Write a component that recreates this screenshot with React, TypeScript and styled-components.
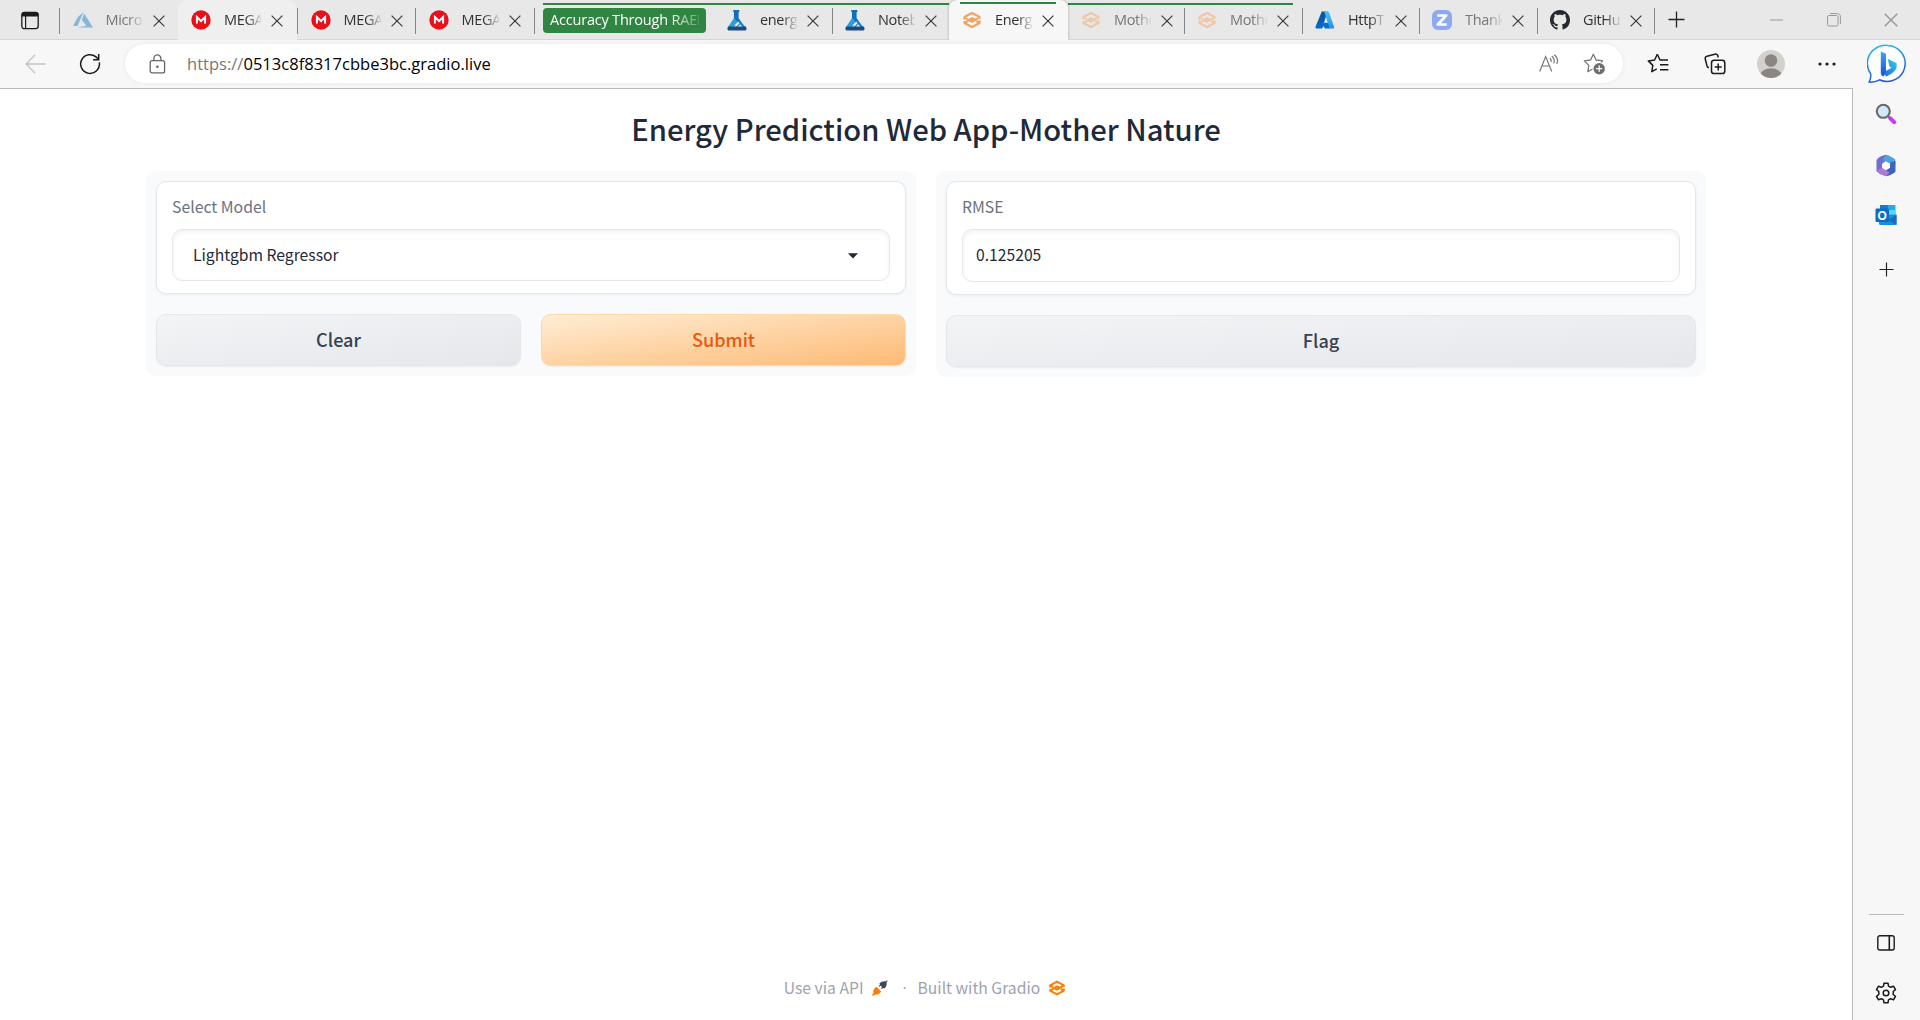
import React from "react";
import styled, { createGlobalStyle, css } from "styled-components";

const ui = `"Open Sans", "Noto Sans", sans-serif`;
const source = `"Noto Sans CJK SC", "Open Sans", sans-serif`;

const GlobalStyle = createGlobalStyle`
  * { box-sizing: border-box; }
  body { margin: 0; background: #fff; overflow: hidden; }
  svg { display: block; flex: none; }
`;

const Window = styled.div`
  display: flex;
  flex-direction: column;
  width: 1920px;
  height: 1020px;
  font-family: ${ui};
  background: #f7f7f7;
`;

/* ---------- Tab strip ---------- */

const TabStrip = styled.div`
  display: flex;
  height: 40px;
  background: #e8e8e8;
  box-shadow: inset 0 -1px 0 #d6d6d6;
`;

const WorkspaceButton = styled.div`
  width: 59px;
  display: flex;
  align-items: center;
  padding: 0 0 0 21px;
`;

const separator = css`
  &::before {
    content: "";
    position: absolute;
    left: 0;
    top: 8px;
    width: 1px;
    height: 26px;
    background: #858585;
  }
`;

const TabItem = styled.div<{ $width: number; $inset: number; $active?: boolean; $hover?: boolean; $line?: boolean; $lineEnd?: number; $divider?: boolean }>`
  position: relative;
  display: flex;
  align-items: center;
  flex: none;
  width: ${(p) => p.$width}px;
  padding: 0 0 0 ${(p) => p.$inset}px;
  ${(p) => p.$divider && separator}
  ${(p) => p.$hover && css`
    background: #efefef;
    border-radius: 9px 9px 0 0;
  `}
  ${(p) => p.$line && css`
    &::after {
      content: "";
      position: absolute;
      left: 0;
      right: ${p.$lineEnd ?? 0}px;
      top: 3px;
      height: 2px;
      background: #2f8541;
    }
  `}
  ${(p) => p.$active && css`
    z-index: 1;
    background: #f7f7f7;
    border-radius: 8px 8px 0 0;
    box-shadow: 0 0 3px rgba(0, 0, 0, 0.3);
    clip-path: inset(-2px -4px 0 -4px);
    &::after {
      left: 11px;
      right: 12px;
      top: 2px;
    }
  `}
`;

const Favicon = styled.div<{ $faded?: boolean }>`
  width: 20px;
  height: 20px;
  margin-right: 13px;
  opacity: ${(p) => (p.$faded ? 0.45 : 1)};
`;

const TabTitle = styled.div<{ $faded?: boolean }>`
  width: 37px;
  overflow: hidden;
  white-space: nowrap;
  font-size: 14.5px;
  line-height: 22px;
  letter-spacing: -0.35px;
  color: ${(p) => (p.$faded ? "#777" : "#333")};
  mask-image: linear-gradient(90deg, #000 60%, transparent 105%);
`;

const TabClose = styled.div`
  margin-left: 10px;
  padding-top: 1px;
`;

const TabGroup = styled.div`
  position: relative;
  width: 180px;
  flex: none;
  ${separator}
`;

const GroupChip = styled.div`
  width: 163px;
  height: 25px;
  margin: 8px 8px 0 9px;
  padding: 0 7px;
  border-radius: 4px;
  background: #2f8541;
  position: relative;
  &::before {
    content: "";
    position: absolute;
    left: 0;
    width: 171px;
    top: -5px;
    height: 2px;
    background: #2f8541;
  }
`;

const ChipText = styled.div`
  overflow: hidden;
  white-space: nowrap;
  color: #fff;
  font-size: 14.5px;
  line-height: 23px;
  letter-spacing: -0.2px;
  mask-image: linear-gradient(90deg, #000 80%, rgba(0, 0, 0, 0.25) 100%);
`;

const NewTab = styled.div`
  position: relative;
  width: 45px;
  display: flex;
  align-items: center;
  justify-content: center;
  padding-bottom: 1px;
  ${separator}
`;

const WindowControls = styled.div`
  display: flex;
  margin-left: auto;
`;

const ControlButton = styled.div`
  width: 57.5px;
  display: flex;
  align-items: center;
  justify-content: center;
  padding-bottom: 1px;
`;

/* ---------- Toolbar ---------- */

const Body = styled.div`
  display: flex;
  flex: 1;
  min-height: 0;
`;

const MainColumn = styled.div`
  display: flex;
  flex-direction: column;
  width: 1852px;
`;

const Toolbar = styled.div`
  display: flex;
  align-items: center;
  height: 48px;
  padding: 0 0 1px 17px;
`;

const NavButton = styled.div`
  flex: none;
  width: 54px;
  padding-left: 8px;
`;

const AddressBar = styled.div`
  display: flex;
  flex: none;
  align-items: center;
  width: 1498px;
  height: 39px;
  padding: 0 18px 0 24px;
  border-radius: 20px;
  background: #fff;
  box-shadow: 0 0 4px rgba(0, 0, 0, 0.07);
`;

const Url = styled.div`
  margin-left: 21px;
  font-size: 16.5px;
  line-height: 24px;
  letter-spacing: 0.02px;
  color: #000;
  white-space: nowrap;
`;

const Scheme = styled.span`
  color: #777;
`;

const AddressActions = styled.div`
  display: flex;
  align-items: center;
  gap: 24px;
  margin-left: auto;
`;

const ToolbarActions = styled.div`
  display: flex;
  flex: none;
  margin-left: 7px;
`;

const ToolbarButton = styled.div`
  width: 56.4px;
  flex: none;
  display: flex;
  align-items: center;
  justify-content: center;
`;

/* ---------- Edge sidebar ---------- */

const SideBar = styled.aside`
  display: flex;
  flex-direction: column;
  align-items: center;
  width: 68px;
`;

const BingSlot = styled.div`
  height: 48px;
  padding: 4px 0 0 1px;
`;

const SideInner = styled.div`
  display: flex;
  flex: 1;
  flex-direction: column;
  align-items: center;
  width: 68px;
  padding-right: 1px;
  border-left: 1px solid #b8b8b8;
`;

const SideButton = styled.div<{ $height?: number }>`
  display: flex;
  align-items: center;
  justify-content: center;
  height: ${(p) => p.$height ?? 50}px;
`;

const SideDivider = styled.div`
  width: 35px;
  height: 1px;
  margin-top: auto;
  margin-bottom: 3px;
  background: #bbb;
`;

const SideFooter = styled.div`
  padding-bottom: 2px;
`;

/* ---------- Gradio page ---------- */

const Page = styled.main`
  display: flex;
  flex: 1;
  flex-direction: column;
  align-items: center;
  border-top: 1px solid #b8b8b8;
  background: #fff;
  font-family: ${source};
`;

const Title = styled.h1`
  margin: 20px 0 23px;
  font-size: 29.2px;
  font-weight: 500;
  line-height: 39px;
  color: #1f2937;
  white-space: nowrap;
`;

const Columns = styled.div`
  display: flex;
  align-items: flex-start;
  gap: 20px;
  width: 1560px;
`;

const Panel = styled.section`
  display: flex;
  flex: 1;
  flex-direction: column;
  gap: 20px;
  padding: 10px;
  border-radius: 10px;
  background: #f9fafb;
`;

const Card = styled.div`
  padding: 14px 15px 12px;
  border: 1px solid #e5e7eb;
  border-radius: 10px;
  background: #fff;
  box-shadow: 0 1px 3px rgba(0, 0, 0, 0.06);
`;

const Label = styled.div`
  margin-bottom: 11px;
  font-size: 15.8px;
  line-height: 22px;
  color: #6b7280;
`;

const Field = styled.div<{ $height: number; $indent: number }>`
  display: flex;
  align-items: center;
  justify-content: space-between;
  height: ${(p) => p.$height}px;
  padding: 0 31px ${(p) => p.$height - 51}px ${(p) => p.$indent}px;
  border: 1px solid #e5e7eb;
  border-radius: 10px;
  font-size: 15.7px;
  line-height: 22px;
  color: #1f2937;
  box-shadow: inset 0 2px 5px rgba(0, 0, 0, 0.06);
`;

const Caret = styled.svg`
  margin-top: 2px;
`;

const ButtonRow = styled.div`
  display: flex;
  gap: 20px;
`;

const Button = styled.button<{ $primary?: boolean }>`
  flex: 1;
  height: 52px;
  padding: 0 0 2px;
  border: 1px solid ${(p) => (p.$primary ? "#fed7aa" : "#e5e7eb")};
  border-radius: 10px;
  background: ${(p) =>
    p.$primary
      ? "linear-gradient(to bottom right, #ffedd5, #fdba74)"
      : "linear-gradient(to bottom right, #f3f4f6, #e5e7eb)"};
  box-shadow: 0 1px 2px rgba(0, 0, 0, 0.06);
  font-family: ${source};
  font-size: 18.1px;
  font-weight: 500;
  line-height: 26px;
  color: ${(p) => (p.$primary ? "#ea580c" : "#374151")};
`;

const Footer = styled.footer`
  display: flex;
  align-items: center;
  margin-top: auto;
  margin-bottom: 20px;
  padding-right: 2px;
  font-size: 15.7px;
  line-height: 24px;
  color: #9ca3af;
`;

const FooterItem = styled.div<{ $gap: number }>`
  display: flex;
  align-items: center;
  gap: ${(p) => p.$gap}px;
  white-space: nowrap;
`;

const Dot = styled.div`
  width: 29px;
  padding-left: 10px;
  font-family: "Open Sans", sans-serif;
  text-indent: 4px;
`;

/* ---------- Icons ---------- */

const CloseIcon = ({ size = 12, color = "#3c3c3c" }: { size?: number; color?: string }) => (
  <svg width={size} height={size} viewBox="0 0 12 12" stroke={color} strokeWidth="1.25">
    <path d="M0.6 0.6 11.4 11.4M11.4 0.6 0.6 11.4" />
  </svg>
);

const PlusIcon = ({ size = 17 }: { size?: number }) => (
  <svg width={size} height={size} viewBox="0 0 17 17" stroke="#222" strokeWidth="1.3">
    <path d="M8.5 0.5v16M0.5 8.5h16" />
  </svg>
);

const OldAzureIcon = () => (
  <svg width="20" height="20" viewBox="0 0 20 20" fill="#86b6da">
    <path d="M10.4 2.2 4.9 7.1 0 16h4.5z" />
    <path d="M11.2 3.4 8.7 10.1l4.7 5.6L4.4 17.4H20z" />
  </svg>
);

const MegaIcon = () => (
  <svg width="20" height="20" viewBox="0 0 20 20">
    <circle cx="10" cy="10" r="9.7" fill="#e8101a" />
    <path d="M5.9 13.4V7l4.1 4 4.1-4v6.4" fill="none" stroke="#fff" strokeWidth="2" />
  </svg>
);

const FlaskIcon = () => (
  <svg width="20" height="21" viewBox="0 0 20 21">
    <path d="M6.3 0h6v2.2h-.7v6l2 3-3.400 3.200L7 12.800V2.200h-.7z" fill="#0f70b7" />
    <path d="M7 8 .9 17.200h5.600l4-5.800z" fill="#2b9ee0" />
    <path d="m11.600 8.200 7.300 9.700-2.700.4-2.900-4-3.300 3.300-2.400-2.400 4.300-4.300z" fill="#1583cc" />
    <path d="m7.600 15 3.600-3.400 1.300 1.700-2.900 3.200z" fill="#e8e8e8" />
    <path d="M1.200 16.500h17.600c1.400 2 .8 4.100-1 4.100H2.200c-2 0-2.300-2.400-1-4.100z" fill="#1c4a85" />
  </svg>
);

const GradioIcon = ({ size = 20, color = "#f3a25f" }: { size?: number; color?: string }) => (
  <svg width={size} height={size} viewBox="0 0 20 20" fill="none" stroke={color} strokeWidth="2.300" strokeLinejoin="bevel">
    <path d="M5.600 8.900 2.400 7 10 3l7.600 4L10 11.700 7.600 10.500" />
    <path d="m14.400 11.100 3.200 1.900-7.600 4-7.600-4L10 8.300l2.400 1.200" />
    <path d="M2.300 6.500v3.200M17.700 13.500v-3.200M2.300 13.500v-2.200M17.700 6.500v2.200" strokeWidth="1.700" />
  </svg>
);

const AzureIcon = () => (
  <svg width="20" height="20" viewBox="0 0 20 20">
    <defs>
      <linearGradient id="azL" x1="0" y1="0" x2="0" y2="1">
        <stop offset="0" stopColor="#124e91" />
        <stop offset="1" stopColor="#0869cf" />
      </linearGradient>
      <linearGradient id="azR" x1="0" y1="0" x2="0" y2="1">
        <stop offset="0" stopColor="#43c8f1" />
        <stop offset="1" stopColor="#278fe4" />
      </linearGradient>
    </defs>
    <path d="M6.800 1.500h5.600L7.600 17.400c-.2.700-.8 1.200-1.500 1.200H1.800c-1 0-1.600-.9-1.300-1.900z" fill="url(#azL)" />
    <path d="M5.700 12.800h7.800l1.600 5.800H10z" fill="#0871c9" />
    <path d="M7.900 1.500h4.700c.7 0 1.300.5 1.500 1.100l5 14.300c.3.900-.3 1.700-1.200 1.700h-4.800c.8 0 1.400-.9 1.100-1.700L9.500 2.600c-.2-.7-.8-1.100-1.600-1.100z" fill="url(#azR)" />
  </svg>
);

const ZIcon = () => (
  <svg width="20" height="20" viewBox="0 0 20 20">
    <rect width="20" height="20" rx="6" fill="#8daaf0" />
    <path d="M5.300 5.500h8.900L5.800 14.500h9" fill="none" stroke="#fff" strokeWidth="2.700" strokeLinejoin="round" />
  </svg>
);

const GithubIcon = () => (
  <svg width="20" height="20" viewBox="0 0 16 16" fill="#24292f">
    <path d="M8 0C3.58 0 0 3.58 0 8c0 3.54 2.290 6.530 5.470 7.590.4.070.55-.17.55-.38 0-.19-.01-.82-.01-1.490-2.010.37-2.530-.49-2.690-.94-.09-.23-.48-.94-.82-1.130-.28-.15-.68-.52-.01-.53.63-.01 1.080.58 1.230.82.72 1.210 1.870.87 2.330.66.07-.52.28-.87.51-1.070-1.780-.2-3.640-.89-3.640-3.950 0-.87.31-1.590.82-2.150-.08-.2-.36-1.020.08-2.120 0 0 .67-.21 2.200.82.64-.18 1.320-.27 2-.27s1.360.09 2 .27c1.530-1.040 2.200-.82 2.200-.82.44 1.100.16 1.920.08 2.120.51.56.82 1.270.82 2.150 0 3.070-1.870 3.750-3.650 3.950.29.25.54.73.54 1.480 0 1.070-.01 1.930-.01 2.200 0 .21.15.46.55.38A8.010 8.010 0 0 0 16 8c0-4.420-3.580-8-8-8z" />
  </svg>
);

const WorkspaceIcon = () => (
  <svg width="18" height="19" viewBox="0 0 18 19">
    <rect x="0.800" y="1.300" width="16.400" height="16.400" rx="2.600" fill="none" stroke="#1b1b1b" strokeWidth="1.300" />
    <path d="M0.800 5.600V3.600C.8 2 1.800 1 3.300 1h11.400c1.500 0 2.500 1 2.500 2.600v2z" fill="#1b1b1b" />
    <path d="M4.600 5v12.500" stroke="#1b1b1b" strokeWidth="1.200" />
  </svg>
);

const BackIcon = () => (
  <svg width="21" height="20" viewBox="0 0 21 20" fill="none" stroke="#c4c4c4" strokeWidth="1.300">
    <path d="M20.500 10H1.500M10 1 1 10l9 9" />
  </svg>
);

const ReloadIcon = () => (
  <svg width="22" height="22" viewBox="0 0 22 22" fill="none" stroke="#1b1b1b" strokeWidth="1.500">
    <path d="M20.300 9.300a9.400 9.400 0 1 1-2.600-4.900l1.500 1.600" />
    <path d="M19.700 1v5.700h-5.600" />
  </svg>
);

const LockIcon = () => (
  <svg width="17" height="20" viewBox="0 0 17 20" fill="none" stroke="#666" strokeWidth="1.300">
    <rect x="1.200" y="6.700" width="14.400" height="12.200" rx="2" />
    <path d="M4.900 6.700V4.400a3.500 3.500 0 0 1 7 0v2.300" />
    <circle cx="8.400" cy="12.700" r="1.300" fill="#666" stroke="none" />
  </svg>
);

const ReadAloudIcon = () => (
  <svg width="20" height="20" viewBox="0 0 20 20" fill="none" stroke="#777" strokeWidth="1.200">
    <path d="M.7 17.500 6.700 2.500l6 15M2.900 12h7.700" />
    <path d="M10.800 4c1.200 1 1.600 2.500 1.300 4M12.800 2c2.100 1.700 2.900 4.600 1.900 7.400M15.200.7c3 2.200 3.900 5.900 2.600 9.300" />
  </svg>
);

const starPath = "M10.300 1.300 7.600 7 1.300 7.900l4.500 4.500-1 6.300 5-2.800";

const AddFavoriteIcon = () => (
  <svg width="22" height="22" viewBox="0 0 22 22" fill="none" stroke="#777" strokeWidth="1.300" strokeLinejoin="round">
    <path d="M9.500 16 4.800 18.700l1-6.300L1.300 7.900 7.600 7l2.700-5.700L13.100 7l6.400.9-1.200 1.400" />
    <circle cx="16.200" cy="15.700" r="5.700" fill="#6e6e6e" stroke="none" />
    <path d="M16.200 12.600v6.200M13.100 15.700h6.200" stroke="#fff" />
  </svg>
);

const FavoritesIcon = () => (
  <svg width="22" height="21" viewBox="0 0 22 21" fill="none" stroke="#1b1b1b" strokeWidth="1.500" strokeLinejoin="round">
    <path d={starPath} />
    <path d="M10.300 1.300 13 7h8M13 11.800h8.400M13 16.700h8.400" />
  </svg>
);

const CollectionsIcon = () => (
  <svg width="22" height="22" viewBox="0 0 22 22" fill="none" stroke="#1b1b1b" strokeWidth="1.500">
    <rect x="7.500" y="7.300" width="13.300" height="13.300" rx="2.600" />
    <path d="M14.200 10.500v7M10.700 14h7M4.900 14.800c-1-.3-1.600-.8-1.900-1.800L1.300 6.300c-.4-1.500.3-2.700 1.700-3.100l7.800-2c1.500-.4 2.700.3 3.100 1.800l.3 1.500" />
  </svg>
);

const AvatarIcon = () => (
  <svg width="28" height="28" viewBox="0 0 28 28">
    <defs>
      <clipPath id="face"><circle cx="14" cy="14" r="14" /></clipPath>
    </defs>
    <g clipPath="url(#face)">
      <rect width="28" height="28" fill="#d3d1ce" />
      <circle cx="14" cy="10.500" r="6.300" fill="#8b8683" />
      <ellipse cx="14" cy="25.500" rx="10.500" ry="7.300" fill="#8b8683" />
    </g>
  </svg>
);

const DotsIcon = () => (
  <svg width="18" height="4" viewBox="0 0 18 4" fill="#1b1b1b">
    <circle cx="2" cy="2" r="1.600" /><circle cx="9" cy="2" r="1.600" /><circle cx="16" cy="2" r="1.600" />
  </svg>
);

const BingIcon = () => (
  <svg width="40" height="40" viewBox="0 0 40 40">
    <defs>
      <linearGradient id="bubble" x1="0" y1="0" x2="0.300" y2="1">
        <stop offset="0" stopColor="#22c3ee" />
        <stop offset="1" stopColor="#2456d6" />
      </linearGradient>
      <linearGradient id="bStem" x1="0" y1="0" x2="0" y2="1">
        <stop offset="0" stopColor="#3aa5f2" />
        <stop offset="1" stopColor="#1c4fd8" />
      </linearGradient>
      <linearGradient id="bBowl" x1="0" y1="1" x2="1" y2="0">
        <stop offset="0" stopColor="#2160e0" />
        <stop offset="1" stopColor="#35d3e8" />
      </linearGradient>
    </defs>
    <path d="M20.500 1.500a18 18 0 1 1-8 34.300c-3 1.700-6.500 2.600-10.300 2.300 1.500-3 1.900-5.300 1.400-8.400A18 18 0 0 1 20.500 1.500z" fill="#fff" stroke="url(#bubble)" strokeWidth="1.500" />
    <path d="m20.800 15 8.700 4.100c1.100 5-1.400 8.300-4.400 10.100l-5.700 3.300-3.800-3.700 9-5-2.200-1.600z" fill="url(#bBowl)" />
    <path d="m13.800 7.600 5.200 2.200v17.400l-2.400 5.300c-1.800-.6-2.800-1.700-2.800-3.700z" fill="url(#bStem)" />
  </svg>
);

const SearchIcon = () => (
  <svg width="22" height="22" viewBox="0 0 22 22">
    <path d="m12.500 12.500 3 3" stroke="#777" strokeWidth="2.200" />
    <path d="m15.300 15.300 3.900 3.900" stroke="#c83ceb" strokeWidth="4" strokeLinecap="round" />
    <circle cx="8.300" cy="8.300" r="6.500" fill="#cfe9fb" stroke="#696969" strokeWidth="2.100" />
  </svg>
);

const M365Icon = () => (
  <svg width="22" height="23" viewBox="0 0 22 23">
    <path d="M10.500.7c-4 1-8.300 3.300-9 5.600v11l4.300 3.300 2-2V9.400L13 5z" fill="#6f6fd0" />
    <path d="M10.500.7c2.500-.3 8.300 3.500 9.700 4.800v6.800l-5.400-2.600L7.800 6z" fill="#4fa4dc" />
    <path d="M20.500 6.800v10.700c-1 2-7 4.600-9.500 4.700l-2-4.600 6-4V8.800z" fill="#3f62c0" />
    <path d="M1.500 16.500 7 13.700l7.500 4.700-3.300 3.800C8 21.800 3.300 19.600 1.500 16.500z" fill="#ad79d2" />
    <path d="m11 7.500 4 2.300v4L11 16l-3.900-2.200v-4z" fill="#fff" />
  </svg>
);

const OutlookText = styled.text`
  font: 700 12px "Liberation Sans", sans-serif;
  fill: #fff;
`;

const OutlookIcon = () => (
  <svg width="22" height="22" viewBox="0 0 22 22">
    <rect x="5" y="1" width="15.500" height="12" rx="1" fill="#28a8ea" />
    <path d="M5 1h7.800v5H5z" fill="#0f7bd2" />
    <path d="M12.800 6h7.700v6h-7.700z" fill="#50d9ff" />
    <path d="m4 11 17.500-.500V20c0 .6-.4 1-1 1H5.500c-.9 0-1.500-.6-1.500-1.500z" fill="#1490df" />
    <path d="m21.500 11-8.500 5 8.500 5z" fill="#1d6cb4" />
    <rect x="0.500" y="4.500" width="13.500" height="13.500" rx="1.200" fill="#0f6cbd" />
    <OutlookText x="2.600" y="15.600">O</OutlookText>
  </svg>
);

const PanelIcon = () => (
  <svg width="18" height="16" viewBox="0 0 18 16" fill="none" stroke="#1b1b1b" strokeWidth="1.400">
    <rect x="0.800" y="0.800" width="16.400" height="14.200" rx="2" />
    <path d="M12.300.8v14.200" strokeWidth="1.600" />
  </svg>
);

const GearIcon = () => (
  <svg width="22" height="22" viewBox="0 0 22 22" fill="none" stroke="#1b1b1b" strokeWidth="1.500" strokeLinejoin="round">
    <path d="M9 1.200h4l.5 2.900 2.100 1.200 2.900-1.100 2 3.400-2.300 1.900v3l2.300 1.900-2 3.400-2.900-1.100-2.100 1.200-.5 2.900H9l-.5-2.900-2.100-1.200-2.900 1.100-2-3.400 2.300-1.900v-3L1.500 7.600l2-3.400 2.900 1.100 2.100-1.200z" />
    <circle cx="11" cy="11" r="2.800" />
  </svg>
);

const RocketIcon = () => (
  <svg width="16" height="16" viewBox="0 0 16 16">
    <path d="M.3 15.700c.1-1.300.4-2 1.300-2.600-.9-2.600.3-4.700 2.900-6.300l4.700 4.700c-1.600 2.600-3.700 3.500-6 2.900-.8.900-1.600 1.200-2.900 1.300z" fill="#ff7c00" />
    <path d="M7.400 3.600C9.600 1.400 11.900.9 13.700 1.500l1.200-1.200.8.8-1.200 1.200c.6 1.800.1 4.100-2.100 6.300l-1.400-.7-1.200 1.200-.8-.8 1.100-1.200-1.400-1.400-1.200 1.100-.8-.8 1.300-1.200z" fill="#3f4759" />
  </svg>
);

const MinimizeIcon = () => (
  <svg width="13" height="2" viewBox="0 0 13 2"><path d="M0 1h13" stroke="#999" /></svg>
);

const RestoreIcon = () => (
  <svg width="14" height="14" viewBox="0 0 14 14" fill="none" stroke="#999">
    <rect x="0.500" y="2.500" width="10.500" height="10.500" rx="1.500" />
    <path d="M3 .6h7.500c1.700 0 2.900 1.200 2.900 2.900V11" />
  </svg>
);

/* ---------- Data ---------- */

type TabData = {
  title: string;
  icon: React.ReactNode;
  width: number;
  faded?: boolean;
  hover?: boolean;
  active?: boolean;
  line?: boolean;
  lineEnd?: number;
  divider?: boolean;
};

const pinnedTabs: TabData[] = [
  { title: "Micros", icon: <OldAzureIcon />, width: 118.500, faded: true, divider: true },
  { title: "MEGA", icon: <MegaIcon />, width: 119.500, hover: true },
  { title: "MEGA", icon: <MegaIcon />, width: 118, divider: true },
  { title: "MEGA", icon: <MegaIcon />, width: 119, divider: true },
];

const openTabs: TabData[] = [
  { title: "energy", icon: <FlaskIcon />, width: 118, line: true },
  { title: "Notebook", icon: <FlaskIcon />, width: 117, line: true, divider: true },
  { title: "Energy", icon: <GradioIcon />, width: 119, line: true, active: true },
  { title: "Mother", icon: <GradioIcon />, width: 116, line: true, faded: true },
  { title: "Mother", icon: <GradioIcon />, width: 118, line: true, lineEnd: 9, faded: true, divider: true },
  { title: "HttpTrigger", icon: <AzureIcon />, width: 117, divider: true },
  { title: "Thank", icon: <ZIcon />, width: 118, faded: true, divider: true },
  { title: "GitHub", icon: <GithubIcon />, width: 117, divider: true },
];

const Tab = ({ tab, inset }: { tab: TabData; inset: number }) => (
  <TabItem
    $width={tab.width}
    $inset={inset}
    $active={tab.active}
    $hover={tab.hover}
    $line={tab.line}
    $lineEnd={tab.lineEnd}
    $divider={tab.divider}
  >
    <Favicon $faded={tab.faded && tab.title === "Mother"}>{tab.icon}</Favicon>
    <TabTitle $faded={tab.faded}>{tab.title}</TabTitle>
    <TabClose><CloseIcon /></TabClose>
  </TabItem>
);

export default function App() {
  return (
    <Window>
      <GlobalStyle />
      <TabStrip>
        <WorkspaceButton><WorkspaceIcon /></WorkspaceButton>
        {pinnedTabs.map((tab, i) => <Tab key={i} tab={tab} inset={13.5} />)}
        <TabGroup>
          <GroupChip><ChipText>Accuracy Through RAEN</ChipText></GroupChip>
        </TabGroup>
        {openTabs.map((tab, i) => <Tab key={i} tab={tab} inset={13} />)}
        <NewTab><PlusIcon /></NewTab>
        <WindowControls>
          <ControlButton><MinimizeIcon /></ControlButton>
          <ControlButton><RestoreIcon /></ControlButton>
          <ControlButton><CloseIcon size={14} color="#999" /></ControlButton>
        </WindowControls>
      </TabStrip>
      <Body>
        <MainColumn>
          <Toolbar>
            <NavButton><BackIcon /></NavButton>
            <NavButton><ReloadIcon /></NavButton>
            <AddressBar>
              <LockIcon />
              <Url><Scheme>https://</Scheme>0513c8f8317cbbe3bc.gradio.live</Url>
              <AddressActions>
                <ReadAloudIcon />
                <AddFavoriteIcon />
              </AddressActions>
            </AddressBar>
            <ToolbarActions>
              <ToolbarButton><FavoritesIcon /></ToolbarButton>
              <ToolbarButton><CollectionsIcon /></ToolbarButton>
              <ToolbarButton><AvatarIcon /></ToolbarButton>
              <ToolbarButton><DotsIcon /></ToolbarButton>
            </ToolbarActions>
          </Toolbar>
          <Page>
            <Title>Energy Prediction Web App-Mother Nature</Title>
            <Columns>
              <Panel>
                <Card>
                  <Label>Select Model</Label>
                  <Field $height={52} $indent={20}>
                    Lightgbm Regressor
                    <Caret width="10" height="6" viewBox="0 0 10 6" fill="#1f2937"><path d="M0 .3h10L5 5.600z" /></Caret>
                  </Field>
                </Card>
                <ButtonRow>
                  <Button>Clear</Button>
                  <Button $primary>Submit</Button>
                </ButtonRow>
              </Panel>
              <Panel>
                <Card>
                  <Label>RMSE</Label>
                  <Field $height={53} $indent={13}>0.125205</Field>
                </Card>
                <ButtonRow>
                  <Button>Flag</Button>
                </ButtonRow>
              </Panel>
            </Columns>
            <Footer>
              <FooterItem $gap={9}>Use via API <RocketIcon /></FooterItem>
              <Dot>·</Dot>
              <FooterItem $gap={8}>Built with Gradio <GradioIcon size={18} color="#ff7c00" /></FooterItem>
            </Footer>
          </Page>
        </MainColumn>
        <SideBar>
          <BingSlot><BingIcon /></BingSlot>
          <SideInner>
            <SideButton $height={52}><SearchIcon /></SideButton>
            <SideButton><M365Icon /></SideButton>
            <SideButton><OutlookIcon /></SideButton>
            <SideButton $height={58}><PlusIcon size={15} /></SideButton>
            <SideDivider />
            <SideFooter>
              <SideButton><PanelIcon /></SideButton>
              <SideButton><GearIcon /></SideButton>
            </SideFooter>
          </SideInner>
        </SideBar>
      </Body>
    </Window>
  );
}
